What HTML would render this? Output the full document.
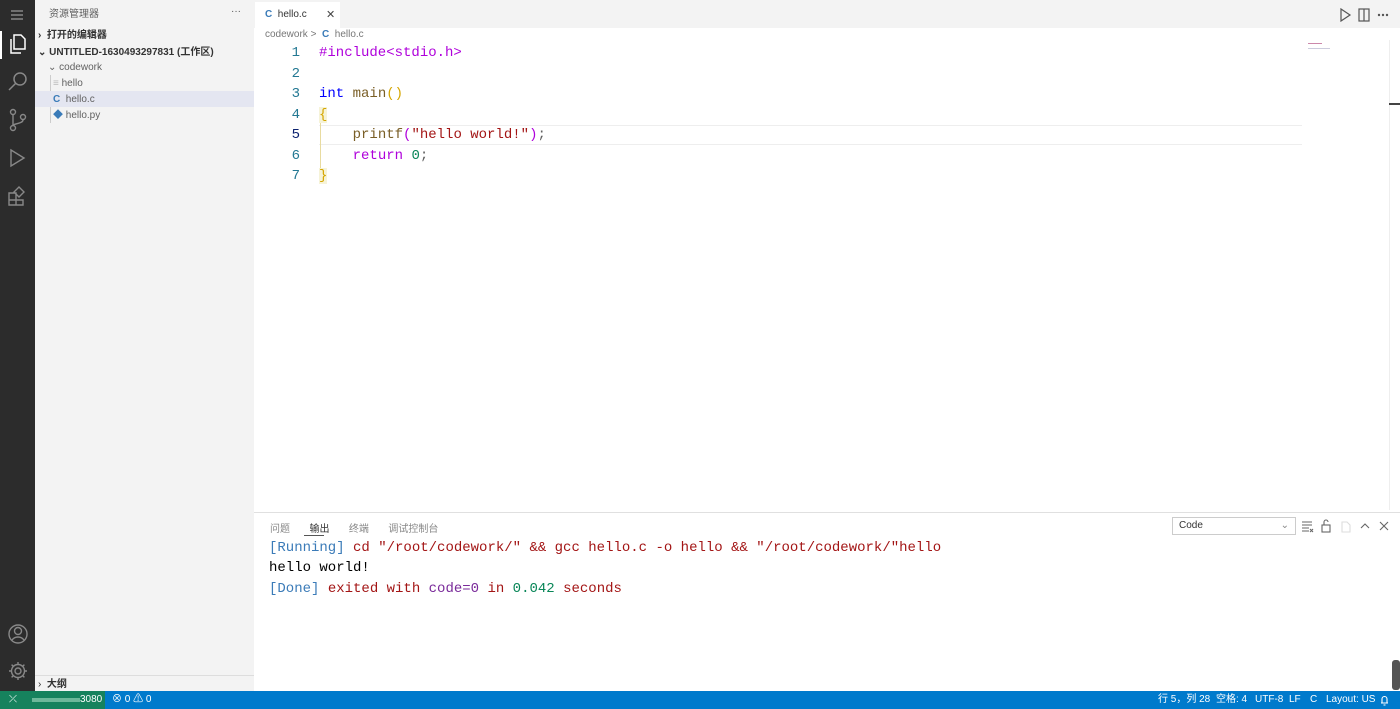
<!DOCTYPE html>
<html><head><meta charset="utf-8"><style>
*{margin:0;padding:0;box-sizing:border-box}
body{width:1400px;height:709px;overflow:hidden;background:#fff;font-family:"Liberation Sans","Noto Sans CJK SC",sans-serif;position:relative;font-size:11px;color:#616161}
.abs{position:absolute;white-space:nowrap}
.act{left:0;top:0;width:35px;height:691px;background:#2c2c2c}
.side{left:35px;top:0;width:219px;height:691px;background:#f3f3f3}
.side .abs{line-height:14px;font-size:10px}
.mono{font-family:"Liberation Mono",monospace;font-size:14px;white-space:pre}
.ln{position:absolute;left:280px;width:20px;text-align:right;color:#237893}
.cl{position:absolute;left:319px}
svg{position:absolute}
.sb .abs{top:0;line-height:18px}
</style></head><body>
<div class="abs act">
<div class="abs" style="left:0;top:31px;width:2px;height:28px;background:#fff"></div>
<svg style="left:10px;top:9px" width="14" height="12"><path d="M1 2h12M1 6h12M1 10h12" stroke="#999" stroke-width="1.2"/></svg>
<svg style="left:7px;top:33px" width="20" height="22" fill="none" stroke="#fff" stroke-width="1.5"><path d="M7 2h7l4 4v10H7z"/><path d="M4 6v14h10"/></svg>
<svg style="left:7px;top:71px" width="22" height="22" fill="none" stroke="#888" stroke-width="1.5"><circle cx="13" cy="8" r="6"/><path d="M9 12l-7 7"/></svg>
<svg style="left:7px;top:108px" width="22" height="24" fill="none" stroke="#888" stroke-width="1.4"><circle cx="6" cy="4" r="2.5"/><circle cx="6" cy="20" r="2.5"/><circle cx="16" cy="9" r="2.5"/><path d="M6 7v10M16 12c0 4-10 3-10 6"/></svg>
<svg style="left:7px;top:147px" width="22" height="22" fill="none" stroke="#888" stroke-width="1.4"><path d="M4 3l13 8-13 8z"/></svg>
<svg style="left:7px;top:185px" width="22" height="22" fill="none" stroke="#888" stroke-width="1.4"><path d="M2 8h7v7H2zM9 15h7v5H9zM2 15h7v5H2zM12 2l5 5-5 5-5-5z"/></svg>
<svg style="left:7px;top:623px" width="22" height="22" fill="none" stroke="#888" stroke-width="1.4"><circle cx="11" cy="11" r="9"/><circle cx="11" cy="8" r="3.5"/><path d="M5 17c3-4 9-4 12 0"/></svg>
<svg style="left:7px;top:660px" width="22" height="22" fill="none" stroke="#888" stroke-width="1.4"><circle cx="11" cy="11" r="3"/><path d="M11 2v3M11 17v3M2 11h3M17 11h3M4.6 4.6l2 2M15.4 15.4l2 2M4.6 17.4l2-2M15.4 6.6l2-2"/><circle cx="11" cy="11" r="6.5"/></svg>
</div>
<div class="abs side">
<div class="abs" style="left:14px;top:8px">资源管理器</div>
<div class="abs" style="left:196px;top:5px;color:#555">···</div>
<div class="abs" style="left:3px;top:29px;color:#333;font-weight:bold">›&nbsp; 打开的编辑器</div>
<div class="abs" style="left:3px;top:46px;color:#333;font-weight:bold">⌄ UNTITLED-1630493297831 (工作区)</div>
<div class="abs" style="left:13px;top:61px">⌄ codework</div>
<div class="abs" style="left:15px;top:75px;width:1px;height:48px;background:#ccc"></div>
<div class="abs" style="left:18px;top:77px"><span style="color:#bbb">≡</span> hello</div>
<div class="abs" style="left:0;top:91px;width:219px;height:16px;background:#e4e6f1"></div>
<div class="abs" style="left:18px;top:93px"><b style="color:#3a7bb8">C</b>&nbsp; hello.c</div>
<div class="abs" style="left:18px;top:109px"><span style="color:#3a7bb8">◆</span> hello.py</div>
<div class="abs" style="left:0;top:675px;width:219px;height:1px;background:#ddd"></div>
<div class="abs" style="left:3px;top:678px;color:#333">›&nbsp; <b>大纲</b></div>
</div>
<div class="abs" style="left:254px;top:0;width:1146px;height:28px;background:#f3f3f3"></div>
<div class="abs" style="left:255px;top:2px;width:85px;height:26px;background:#fff"></div>
<div class="abs" style="left:265px;top:9px;color:#333;font-size:10px"><b style="color:#3a7bb8">C</b>&nbsp; hello.c</div>
<div class="abs" style="left:326px;top:8px;color:#444">✕</div>
<svg style="left:1339px;top:8px" width="50" height="14" fill="none" stroke="#555" stroke-width="1.2"><path d="M2 1l9 6-9 6z"/><rect x="20" y="1" width="10" height="12"/><path d="M25 1v12"/><circle cx="40" cy="7" r=".6"/><circle cx="44" cy="7" r=".6"/><circle cx="48" cy="7" r=".6"/></svg>
<div class="abs" style="left:265px;top:29px;color:#777;font-size:10px">codework &gt;&nbsp; <b style="color:#3a7bb8">C</b>&nbsp; hello.c</div>
<div class="abs" style="left:319px;top:125px;width:983px;height:20px;border-top:1px solid #eee;border-bottom:1px solid #eee"></div>
<div class="abs" style="left:320px;top:107px;width:1px;height:76px;background:#e8dba0"></div>
<div class="mono">
<div class="ln" style="top:45px">1</div><div class="ln" style="top:66px">2</div><div class="ln" style="top:86px">3</div><div class="ln" style="top:107px">4</div><div class="ln" style="top:127px;color:#0b216f">5</div><div class="ln" style="top:148px">6</div><div class="ln" style="top:168px">7</div>
<div class="cl" style="top:45px;color:#af00db">#include&lt;stdio.h&gt;</div>
<div class="cl" style="top:86px"><span style="color:#0000ff">int</span> <span style="color:#795e26">main</span><span style="color:#d5a600">()</span></div>
<div class="cl" style="top:107px;color:#d5a600;background:#f6f3d8">{</div>
<div class="cl" style="top:127px">    <span style="color:#795e26">printf</span><span style="color:#af00db">(</span><span style="color:#a31515">"hello world!"</span><span style="color:#af00db">)</span>;</div>
<div class="cl" style="top:148px">    <span style="color:#af00db">return</span> <span style="color:#098658">0</span>;</div>
<div class="cl" style="top:168px;color:#d5a600;background:#f6f3d8">}</div>
</div>
<div class="abs" style="left:1308px;top:43px;width:14px;height:1px;background:#c8a"></div>
<div class="abs" style="left:1308px;top:48px;width:22px;height:1px;background:#ccd"></div>
<div class="abs" style="left:1389px;top:40px;width:1px;height:470px;background:#eee"></div>
<div class="abs" style="left:1389px;top:103px;width:11px;height:2px;background:#444"></div>
<div class="abs" style="left:254px;top:512px;width:1146px;height:1px;background:#e0e0e0"></div>
<div class="abs" style="left:270px;top:520px;color:#888;font-size:10px">问题&nbsp;&nbsp;&nbsp;&nbsp;&nbsp;&nbsp; <span style="color:#333">输出</span>&nbsp;&nbsp;&nbsp;&nbsp;&nbsp;&nbsp; 终端&nbsp;&nbsp;&nbsp;&nbsp;&nbsp;&nbsp; 调试控制台</div>
<div class="abs" style="left:304px;top:535px;width:20px;height:1px;background:#555"></div>
<div class="abs" style="left:1172px;top:517px;width:124px;height:18px;border:1px solid #ccc;color:#333;padding:0 6px;line-height:16px;font-size:10px">Code<span style="float:right;color:#888">⌄</span></div>
<svg style="left:1300px;top:519px" width="92" height="14" fill="none" stroke="#666" stroke-width="1.1"><path d="M2 3h10M2 6h10M2 9h7M2 12h7M10 10l3 3M13 10l-3 3"/><rect x="22" y="6" width="8" height="7"/><path d="M24 6V3a2 2 0 0 1 4 0"/><path d="M42 3h5l3 3v7h-8z" stroke="#ddd"/><path d="M61 9l4-4 4 4M80 3l8 8M88 3l-8 8"/></svg>
<div class="mono abs" style="left:269px;top:540px;color:#a31515"><span style="color:#3b7bb8">[Running]</span> cd "/root/codework/" &amp;&amp; gcc hello.c -o hello &amp;&amp; "/root/codework/"hello</div>
<div class="mono abs" style="left:269px;top:560px;color:#000">hello world!</div>
<div class="mono abs" style="left:269px;top:581px;color:#a31515"><span style="color:#3b7bb8">[Done]</span> exited with <span style="color:#7a2a9a">code=0</span> in <span style="color:#098658">0.042</span> seconds</div>
<div class="abs" style="left:1392px;top:660px;width:8px;height:30px;background:#555;border-radius:3px"></div>
<div class="abs sb" style="left:0;top:691px;width:1400px;height:18px;background:#007acc;color:#fff;font-size:10px">
<div class="abs" style="left:0;width:105px;height:18px;background:#16825d"></div>
<div class="abs" style="left:9px">⤫</div>
<div class="abs" style="left:32px;top:7px;width:48px;height:4px;background:#6db89a;line-height:4px"></div>
<div class="abs" style="left:80px">3080</div>
<div class="abs" style="left:112px">⊗ 0 ⚠ 0</div>
<div class="abs" style="left:1158px">行 5，列 28</div>
<div class="abs" style="left:1216px">空格: 4</div>
<div class="abs" style="left:1255px">UTF-8</div>
<div class="abs" style="left:1289px">LF</div>
<div class="abs" style="left:1310px">C</div>
<div class="abs" style="left:1326px">Layout: US</div>
<svg style="left:1379px;top:3px" width="11" height="12" fill="none" stroke="#fff" stroke-width="1.1"><path d="M2 9h7M3 9V5a2.5 2.5 0 0 1 5 0v4M4.5 11h2"/></svg>
</div>
</body></html>
